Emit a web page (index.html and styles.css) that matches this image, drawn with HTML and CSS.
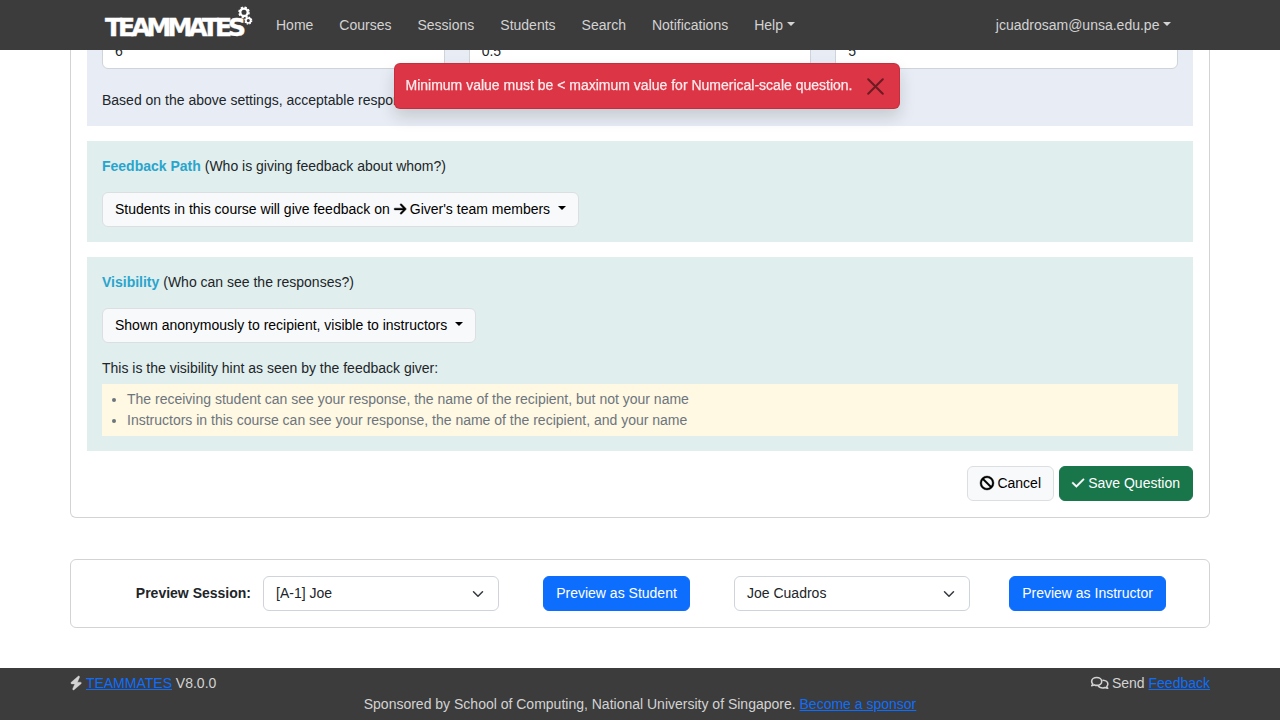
FILE: index.html
```html
<!DOCTYPE html>
<html lang="en">
<head>
<meta charset="utf-8">
<title>TEAMMATES</title>
<link rel="stylesheet" href="styles.css">
</head>
<body>
<nav class="navbar">
  <div class="nav-inner">
    <svg class="logo" width="150" height="36" viewBox="0 0 150 36">
      <text x="2" y="31.7" textLength="141" lengthAdjust="spacing">TEAMMATES</text>
      <g class="gear">
        <circle cx="141" cy="8.3" r="3.7" stroke-width="2.3"/>
        <circle cx="141" cy="8.3" r="5" stroke-width="1.7" stroke-dasharray="2.2 1.727"/>
        <circle cx="145.3" cy="16.6" r="2.4" stroke-width="1.7"/>
        <circle cx="145.3" cy="16.6" r="3.4" stroke-width="1.3" stroke-dasharray="1.5 1.17"/>
      </g>
    </svg>
    <a class="nav-link">Home</a>
    <a class="nav-link">Courses</a>
    <a class="nav-link">Sessions</a>
    <a class="nav-link">Students</a>
    <a class="nav-link">Search</a>
    <a class="nav-link">Notifications</a>
    <a class="nav-link caret">Help</a>
    <a class="nav-link caret account">jcuadrosam@unsa.edu.pe</a>
  </div>
</nav>

<div class="toast" role="alert">
  <span>Minimum value must be &lt; maximum value for Numerical-scale question.</span>
  <svg class="close" width="17" height="17" viewBox="0 0 17 17"><path d="M1.2 1.2l14.6 14.6M15.8 1.2L1.2 15.8"/></svg>
</div>

<main class="container">
  <section class="card question">
    <div class="panel settings">
      <div class="inputs">
        <div class="control">6</div>
        <div class="control">0.5</div>
        <div class="control">5</div>
      </div>
      <p>Based on the above settings, acceptable responses are:</p>
    </div>
    <div class="panel path">
      <p><b class="heading">Feedback Path</b> (Who is giving feedback about whom?)</p>
      <button class="btn light caret">Students in this course will give feedback on <svg class="icon" viewBox="0 0 448 512"><path d="M438.6 278.6c12.5-12.5 12.5-32.8 0-45.3l-160-160c-12.5-12.5-32.8-12.5-45.3 0s-12.5 32.8 0 45.3L338.8 224 32 224c-17.7 0-32 14.3-32 32s14.3 32 32 32l306.7 0L233.4 393.4c-12.5 12.5-12.5 32.8 0 45.3s32.8 12.5 45.3 0l160-160z"/></svg> Giver's team members </button>
    </div>
    <div class="panel path">
      <p><b class="heading">Visibility</b> (Who can see the responses?)</p>
      <button class="btn light caret">Shown anonymously to recipient, visible to instructors </button>
      <p class="hint-title">This is the visibility hint as seen by the feedback giver:</p>
      <ul class="hints">
        <li>The receiving student can see your response, the name of the recipient, but not your name</li>
        <li>Instructors in this course can see your response, the name of the recipient, and your name</li>
      </ul>
    </div>
    <div class="actions">
      <button class="btn light"><svg class="icon wide" viewBox="0 0 512 512"><path d="M367.2 412.5L99.5 144.8C77.1 176.1 64 214.5 64 256c0 106 86 192 192 192c41.5 0 79.9-13.1 111.2-35.5zm45.3-45.3C434.9 335.9 448 297.5 448 256c0-106-86-192-192-192c-41.5 0-79.9 13.1-111.2 35.5L412.5 367.2zM0 256a256 256 0 1 1 512 0A256 256 0 1 1 0 256z"/></svg> Cancel</button>
      <button class="btn success"><svg class="icon" viewBox="0 0 448 512"><path d="M438.6 105.4c12.5 12.5 12.5 32.8 0 45.3l-256 256c-12.5 12.5-32.8 12.5-45.3 0l-128-128c-12.5-12.5-12.5-32.8 0-45.3s32.8-12.5 45.3 0L160 338.7 393.4 105.4c12.5-12.5 32.8-12.5 45.3 0z"/></svg> Save Question</button>
    </div>
  </section>

  <section class="card preview">
    <b class="label">Preview Session:</b>
    <div class="control select">[A-1] Joe<svg width="12" height="12" viewBox="0 0 16 16"><path d="m2 5 6 6 6-6"/></svg></div>
    <button class="btn primary">Preview as Student</button>
    <div class="control select">Joe Cuadros<svg width="12" height="12" viewBox="0 0 16 16"><path d="m2 5 6 6 6-6"/></svg></div>
    <button class="btn primary">Preview as Instructor</button>
  </section>
</main>

<footer class="footer">
  <div class="footer-row">
    <span><svg class="icon" viewBox="0 0 448 512"><path d="M349.4 44.6c5.9-13.7 1.5-29.7-10.6-38.5s-28.6-8-39.9 1.8l-256 224c-10 8.8-13.6 22.9-8.9 35.3S50.7 288 64 288H175.5L98.6 467.4c-5.9 13.7-1.5 29.7 10.6 38.5s28.6 8 39.9-1.8l256-224c10-8.8 13.6-22.9 8.9-35.3s-16.6-20.7-30-20.7H272.5L349.4 44.6z"/></svg> <a class="link">TEAMMATES</a> V8.0.0</span>
    <span><svg class="icon comments" viewBox="0 0 640 512"><path d="M208 56C106 56 24 118 24 200c0 34 14 64 38 88c-4 26-16 48-34 64c42 0 74-12 98-26c25 10 52 18 82 18c102 0 184-62 184-144S310 56 208 56z"/><path d="M438 154c102 4 178 66 178 142c0 34-14 64-38 88c4 26 16 48 34 64c-42 0-74-12-98-26c-25 10-52 18-82 18c-78 0-142-34-170-84"/></svg> Send <a class="link">Feedback</a></span>
  </div>
  <div class="sponsor">Sponsored by School of Computing, National University of Singapore. <a class="link">Become a sponsor</a></div>
</footer>
</body>
</html>
```
FILE: styles.css
```css
* { box-sizing: border-box; }
body {
  margin: 0;
  height: 720px;
  overflow: hidden;
  display: flex;
  flex-direction: column;
  background: #fff;
  color: #212529;
  font: 14px/21px "Liberation Sans", Arial, sans-serif;
}
p { margin: 0; }
.navbar {
  position: fixed;
  inset: 0 0 auto;
  z-index: 10;
  height: 50px;
  background: #3c3c3c;
}
.nav-inner {
  display: flex;
  align-items: center;
  height: 50px;
  padding: 0 101px 0 103px;
}
.logo { margin: -6px 15px 0 0; overflow: visible; }
.logo text { font: bold 25px "DejaVu Sans", sans-serif; fill: #fff; stroke: #fff; stroke-width: .4; }
.gear { fill: none; stroke: #fff; }
.nav-link { padding: 0 8px; margin-right: 10px; color: #d3d3d3; white-space: nowrap; }
.nav-link.account { margin: 0 0 0 auto; }
.caret::after {
  content: "";
  display: inline-block;
  margin-left: .255em;
  vertical-align: .255em;
  border-top: .3em solid;
  border-right: .3em solid transparent;
  border-left: .3em solid transparent;
}
.toast {
  position: fixed;
  z-index: 11;
  top: 62.5px;
  left: 393.5px;
  width: 506.5px;
  height: 46px;
  padding: 0 15px 0 12px;
  display: flex;
  align-items: center;
  justify-content: space-between;
  color: #fff;
  background: #dc3545;
  border: 1px solid rgba(0, 0, 0, .1);
  border-radius: 6px;
  box-shadow: 0 8px 16px rgba(0, 0, 0, .15);
}
.toast span { opacity: .9; margin: -1px 0 0 -1px; -webkit-text-stroke: .25px #fff; }
.close { stroke: #000; stroke-width: 2; stroke-linecap: round; opacity: .5; margin-top: 2px; }
.container { flex: 1; width: 1140px; margin: 0 auto; }
.card { border: 1px solid #d3d3d3; border-radius: 6px; background: #fff; }
.question { padding: 0 16px 16px; border-top: 0; border-radius: 0 0 6px 6px; }
.panel { padding: 15px; margin-bottom: 15px; }
.settings { padding-top: 34px; background: #e8edf5; }
.path { background: #e0eeed; }
.path p { margin-bottom: 15px; }
.inputs { display: grid; grid-template-columns: repeat(3, 1fr); gap: 24px; margin-bottom: 21px; }
.control {
  height: 35px;
  padding: 6px 12px;
  border: 1px solid #ced4da;
  border-radius: 6px;
  background: #fff;
}
.heading { color: #29a5cd; }
.btn {
  display: inline-block;
  height: 35px;
  padding: 6px 12px;
  font: inherit;
  border: 1px solid;
  border-radius: 6px;
  white-space: pre;
  vertical-align: top;
}
.light { color: #000; background: #f8f9fa; border-color: #dcdfe2; }
.success { color: #fff; background: #19764a; border-color: #19764a; }
.primary { color: #fff; background: #0d6efd; border-color: #0d6efd; }
.icon {
  width: 12.25px;
  height: 14px;
  vertical-align: -.125em;
  fill: currentColor;
  stroke: currentColor;
  stroke-width: 14;
  overflow: visible;
}
.icon.wide { width: 14px; }
.icon.comments { width: 17.5px; fill: none; stroke-width: 58; stroke-linejoin: round; stroke-linecap: round; }
.path .hint-title { margin: 15px 0 5px; }
.hints { margin: 0; padding: 5px 5px 5px 25px; background: #fff8e3; color: #6c757d; }
.actions { display: flex; justify-content: flex-end; gap: 5px; }
.preview {
  display: grid;
  grid-template-columns: 192px 236px 235px 236px 235px;
  align-items: center;
  margin-top: 41px;
  padding: 16px 0;
}
.label { width: 180px; text-align: right; }
.select { display: flex; justify-content: space-between; align-items: center; padding-right: 14px; }
.select svg { fill: none; stroke: #343a40; stroke-width: 2; stroke-linecap: round; stroke-linejoin: round; }
.preview .primary { justify-self: center; }
.footer { height: 52px; padding: 5px 70px; background: #3c3c3c; color: #d3d3d3; }
.footer-row { display: flex; justify-content: space-between; }
.sponsor { text-align: center; }
.link { color: #0d6efd; text-decoration: underline; }
```
